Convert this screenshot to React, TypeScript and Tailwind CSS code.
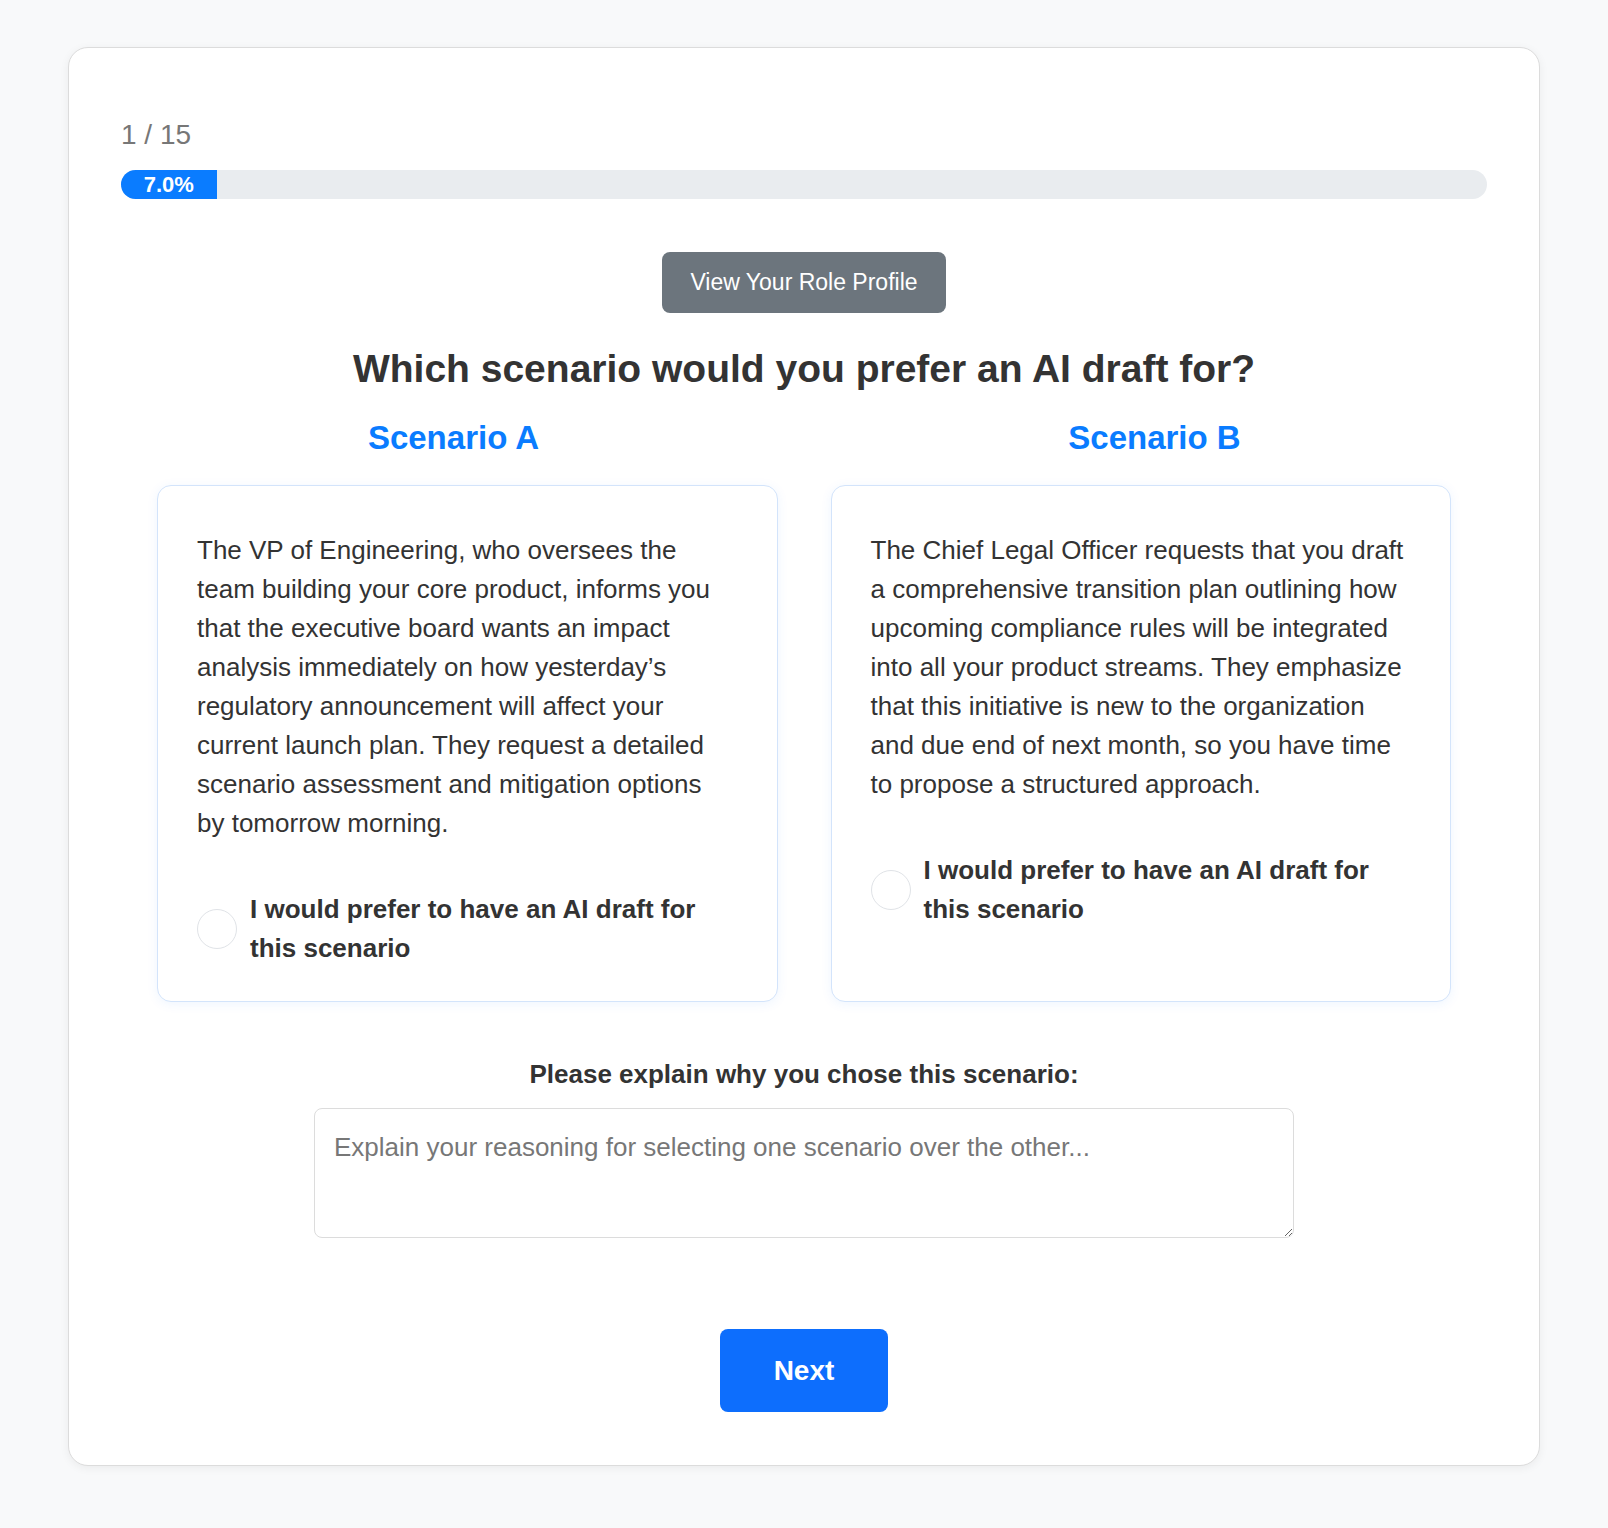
import React from "react";

const scenarios = [
  {
    id: "A",
    title: "Scenario A",
    text: "The VP of Engineering, who oversees the team building your core product, informs you that the executive board wants an impact analysis immediately on how yesterday’s regulatory announcement will affect your current launch plan. They request a detailed scenario assessment and mitigation options by tomorrow morning.",
  },
  {
    id: "B",
    title: "Scenario B",
    text: "The Chief Legal Officer requests that you draft a comprehensive transition plan outlining how upcoming compliance rules will be integrated into all your product streams. They emphasize that this initiative is new to the organization and due end of next month, so you have time to propose a structured approach.",
  },
];

export default function App() {
  const progress = 7.0;

  return (
    <div className="min-h-screen bg-[#f8f9fa] pt-[47px] pb-[62px] font-['Liberation_Sans',Arial,sans-serif]">
      <div className="mx-auto w-[1472px] rounded-[20px] border border-[#dcdcdc] bg-white px-[52px] pt-[66px] pb-[53px] shadow-[0_2px_10px_rgba(0,0,0,0.06)]">
        {/* Progress */}
        <div className="text-[28px] leading-[42px] text-[#777]">1 / 15</div>
        <div className="mt-[14px] h-[29px] w-full overflow-hidden rounded-full bg-[#e9ecef]">
          <div
            className="flex h-full items-center justify-center bg-[#0a7cff] text-[22px] font-bold leading-[29px] text-white"
            style={{ width: `${progress}%` }}
          >
            {progress.toFixed(1)}%
          </div>
        </div>

        <div className="mt-[53px] flex justify-center">
          <button className="h-[61px] rounded-[8px] bg-[#6c757d] px-[28px] text-[23px] text-white">
            View Your Role Profile
          </button>
        </div>

        <h1 className="mt-[32px] text-center text-[39px] font-bold leading-[47px] text-[#333]">
          Which scenario would you prefer an AI draft for?
        </h1>

        {/* Scenario titles */}
        <div className="mt-[26px] grid grid-cols-2 gap-[36px]">
          {scenarios.map((s) => (
            <h2 key={s.id} className="text-center text-[33px] font-bold leading-[40px] text-[#0a7cff]">
              {s.title}
            </h2>
          ))}
        </div>

        {/* Scenario cards */}
        <div className="mt-[27px] grid grid-cols-2 gap-[53px] px-[36px]">
          {scenarios.map((s) => (
            <div
              key={s.id}
              className="flex flex-col rounded-[14px] border border-[#d3e4fb] bg-white pl-[39px] pr-[43px] pt-[45px] pb-[33px] shadow-[0_2px_12px_rgba(13,110,253,0.07)]"
            >
              <p className="text-[26px] leading-[39px] text-[#333]">{s.text}</p>
              <label className="mt-[47px] flex items-center gap-[13px]">
                <input
                  type="radio"
                  name="scenario"
                  className="h-[40px] w-[40px] shrink-0 appearance-none rounded-full border border-[#e0e3e7] bg-white"
                />
                <span className="text-[26px] font-bold leading-[39px] text-[#333]">
                  I would prefer to have an AI draft for this scenario
                </span>
              </label>
            </div>
          ))}
        </div>

        {/* Explanation */}
        <div className="mt-[53px] text-center text-[26px] font-bold leading-[39px] text-[#333]">
          Please explain why you chose this scenario:
        </div>
        <div className="mt-[14px] flex justify-center">
          <textarea
            className="h-[130px] w-[980px] rounded-[8px] border border-[#dcdcdc] px-[19px] py-[19px] text-[26px] leading-[39px] text-[#333] placeholder:text-[#777] focus:outline-none"
            placeholder="Explain your reasoning for selecting one scenario over the other..."
          />
        </div>

        <div className="mt-[91px] flex justify-center">
          <button className="h-[83px] w-[168px] rounded-[8px] bg-[#0d6efd] text-[28px] font-bold text-white">
            Next
          </button>
        </div>
      </div>
    </div>
  );
}
